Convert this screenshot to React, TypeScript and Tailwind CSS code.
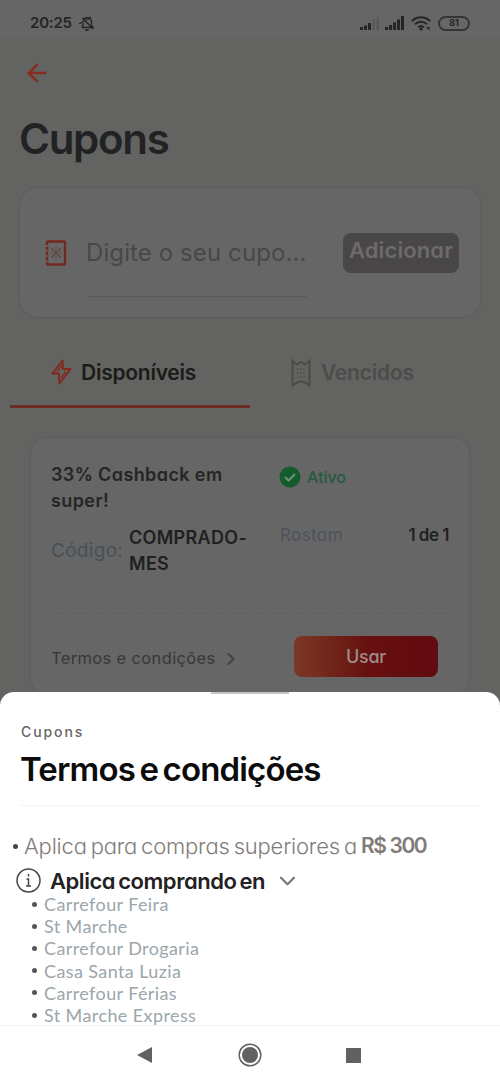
import { ArrowLeft, ChevronDown, ChevronRight } from 'lucide-react';

const stores = [
  'Carrefour Feira',
  'St Marche',
  'Carrefour Drogaria',
  'Casa Santa Luzia',
  'Carrefour Férias',
  'St Marche Express',
];

function StatusBar() {
  return (
    <div className="flex h-[38px] items-center bg-[#666666] pt-[8px] pr-[30px] pl-[30px] text-[#252525]">
      <span className="w-[43px] text-[15px] font-semibold tracking-[-0.2px] whitespace-nowrap">20:25</span>
      <svg className="ml-[5px] h-[17px] w-[18px]" viewBox="0 0 18 17" fill="none" stroke="currentColor" strokeWidth="1.4">
        <path d="M4 12.5h11L13.5 10V6.5a4.5 4.5 0 0 0-8.5-1.3M4 12.5 5.2 10V8M7.5 14.5c.7 1 2.3 1 3 0M1 9 13 2M4.5 3l10.5 11" />
      </svg>
      <div className="ml-auto flex items-center">
        <svg className="h-[14px] w-[19px]" viewBox="0 0 19 14">
          <path fill="currentColor" d="M0 11h3v3H0zM4 9.5h3V14H4zM8 7h3v7H8z" />
          <path fill="#595959" d="M12.5 3.5H15V14h-2.5zM16.5 1H19v13h-2.5z" />
        </svg>
        <svg className="ml-[6px] h-[14px] w-[19px]" viewBox="0 0 19 14" fill="currentColor">
          <path d="M0 11h3v3H0zM4 9h3v5H4zM8 6.5h3V14H8zM12 3.5h3V14h-3zM16 0h3v14h-3z" />
        </svg>
        <svg className="ml-[7px] h-[15px] w-[20px]" viewBox="0 0 20 15" fill="none" stroke="currentColor" strokeWidth="2">
          <path d="M1 5.2C6 0 14 0 19 5.2M4 8.3c3.5-3.3 8.5-3.3 12 0M7 11.2c2-1.7 4-1.7 6 0" />
          <path fill="currentColor" stroke="none" d="m10 11 2 2-2 2-2-2zM15 11h3.5v3.5z" />
        </svg>
        <span className="ml-[7px] flex h-[15px] w-[32px] items-center justify-center rounded-full border-2 border-[#353535] text-[9px] font-bold">
          81
        </span>
      </div>
    </div>
  );
}

function CouponIcon() {
  return (
    <svg className="h-[26px] w-[22px]" viewBox="0 0 22 26" fill="none">
      <rect x="2" y="1.5" width="18" height="23" rx="1" stroke="#74281f" strokeWidth="2.4" />
      <path d="M0 6h3M0 11h3M0 16h3M0 21h3" stroke="#666" strokeWidth="1.3" />
      <path d="m6.5 8.5 9 9m0-9-9 9" stroke="#5c473f" strokeWidth="1.5" />
      <path d="M11 7v2.5M11 16.5V19M5.5 13H8M14 13h2.5" stroke="#803a2c" strokeWidth="1.2" />
    </svg>
  );
}

function BoltIcon() {
  return (
    <svg className="h-[26px] w-[21px]" viewBox="0 0 21 26" fill="none" stroke="#83291c" strokeWidth="2" strokeLinejoin="round">
      <path d="M11.5 1.5 1.5 14.5H8L8.5 24.5 19.5 10H12z" />
      <path d="M11 6 6 13M15 12l-5 7" strokeWidth="1.3" />
    </svg>
  );
}

function TicketIcon() {
  return (
    <svg className="h-[28px] w-[20px]" viewBox="0 0 20 28" fill="none" stroke="#4b4b49" strokeWidth="2">
      <path d="M1.5 1.5 6 5.5 10 3l4 2.5 4.5-4v25L14 23.5 10 22l-4 1.5-4.5 3z" />
      <path d="M6 10h8M6 14h8M6 18h8" strokeWidth="1.2" strokeDasharray="2 1" />
    </svg>
  );
}

function CouponCard() {
  return (
    <div className="mx-[31px] mt-[30px] h-[256px] rounded-[16px] bg-[#666666] px-5 pt-6 shadow-[0_0_3px_rgba(0,0,0,0.1)]">
      <div className="flex h-[115px]">
        <div className="w-[229px]">
          <div className="text-[18px] leading-[26px] font-semibold tracking-[0.4px] text-[#252525]">
            33% Cashback em
            <br />
            super!
          </div>
          <div className="mt-[11px] flex items-center">
            <span className="w-[78px] text-[19px] tracking-[0.3px] text-[#465057]">Código:</span>
            <span className="text-[18px] leading-[26px] font-semibold tracking-[0.3px] whitespace-nowrap text-[#202020]">
              COMPRADO-
              <br />
              MES
            </span>
          </div>
        </div>
        <div className="flex-1">
          <div className="mt-[4px] flex h-[22px] items-center text-[16px] font-medium text-[#245b3e]">
            <svg className="mr-[6px] -ml-px h-[22px] w-[22px]" viewBox="0 0 22 22" fill="none">
              <circle cx="11" cy="11" r="10.5" fill="#155c2b" />
              <path d="m6 11 3.5 3.5L16 8" stroke="#719079" strokeWidth="2" />
            </svg>
            Ativo
          </div>
          <div className="mt-[35px] flex items-center justify-between leading-[24px]">
            <span className="text-[17px] tracking-[0.4px] text-[#4c535a]">Rostam</span>
            <span className="text-[17px] font-semibold tracking-[-0.5px] text-[#222]">1 de 1</span>
          </div>
        </div>
      </div>
      <div className="mt-9 border-t border-dashed border-[#5d5d5d]" />
      <div className="mt-[22px] flex h-[41px] items-center">
        <span className="w-[164px] pt-1 text-[16.5px] tracking-[0.35px] whitespace-nowrap text-[#383838]">Termos e condições</span>
        <ChevronRight className="mt-1 ml-[6px] h-[20px] w-[20px] text-[#424242]" strokeWidth={2.5} />
        <div className="mr-[11px] ml-auto flex h-[41px] w-[144px] items-center justify-center rounded-[8px] bg-linear-to-r from-[#7c3725] via-[#67100f] via-50% to-[#620b10] text-[18px] font-medium tracking-[-0.3px] text-[#9b8e8c]">
          Usar
        </div>
      </div>
    </div>
  );
}

function TermsSheet() {
  return (
    <div className="h-[333px] rounded-t-[14px] bg-white">
      <div className="mx-auto h-[2px] w-[78px] bg-[#c6c6c6]" />
      <div className="px-5 pt-[28px]">
        <div className="ml-px h-[20px] text-[14px] leading-[20px] font-medium tracking-[1.9px] text-[#666]">Cupons</div>
        <div className="mt-[7px] h-[40px] text-[33px] leading-[40px] font-semibold tracking-[-0.85px] whitespace-nowrap text-[#0c0c0c] [word-spacing:-3px]">
          Termos e condições
        </div>
        <div className="mt-[16px] h-px bg-[#f4f4f4]" />
      </div>
      <div className="mt-[25px] flex h-[30px] items-center pl-[13px] text-[22px] whitespace-nowrap text-[#817c79]">
        <span className="mr-[6px] h-[5px] w-[5px] rounded-full bg-[#444]" />
        <span className="w-[333px] font-light tracking-[-0.2px] [word-spacing:-2px]">Aplica para compras superiores a</span>
        <span className="ml-[4px] text-[21px] font-semibold tracking-[-1.4px]">R$ 300</span>
      </div>
      <div className="mt-[6px] flex h-[26px] items-center pt-px pl-4">
        <svg className="h-[25px] w-[25px]" viewBox="0 0 25 25" fill="none" stroke="#484848">
          <circle cx="12.5" cy="12.5" r="11.5" strokeWidth="1.5" />
          <path d="M12.5 6v2.5M10.5 11h2v7M10 18h5" strokeWidth="1.5" />
        </svg>
        <span className="ml-[9px] w-[215px] text-[22px] leading-[22px] font-semibold tracking-[-0.45px] whitespace-nowrap text-[#242122] [word-spacing:-2px]">
          Aplica comprando en
        </span>
        <ChevronDown className="ml-[9px] h-[26px] w-[27px] text-[#777]" strokeWidth={2} />
      </div>
      <ul className="pl-[32px]">
        {stores.map((store) => (
          <li
            key={store}
            className="flex h-[22.2px] items-center font-['Lato',sans-serif] text-[18px] leading-[20px] tracking-[0.4px] text-[#9ba6ac]"
          >
            <span className="mr-[7px] h-[5px] w-[5px] rounded-full bg-[#555]" />
            {store}
          </li>
        ))}
      </ul>
    </div>
  );
}

export default function App() {
  return (
    <div className="h-[1085px] w-[500px] overflow-hidden bg-[#636361] font-['Inter',sans-serif] [font-feature-settings:'cv11']">
      <div className="h-[692px]">
        <StatusBar />
        <ArrowLeft className="mt-[21px] ml-[23px] h-[28px] w-[28px] text-[#872d20]" strokeWidth={2.2} />
        <h1 className="mt-[27px] ml-[19px] h-[50px] text-[42px] leading-[50px] font-semibold tracking-[-1.3px] text-[#202223]">
          Cupons
        </h1>
        <div className="mx-5 mt-[24px] flex h-[129px] items-center rounded-[18px] bg-[#666666] pr-[21px] pl-[25px] shadow-[0_0_3px_rgba(0,0,0,0.13)]">
          <CouponIcon />
          <div className="mt-[28px] ml-[19px] w-[221px] border-b border-[#5a5a5a] pb-[27px] text-[24px] leading-[32px] tracking-[0.1px] whitespace-nowrap text-[#484848]">
            Digite o seu cupo...
          </div>
          <div className="ml-auto flex h-[40px] w-[116px] items-center justify-center rounded-[8px] bg-[#494647] pb-1 text-[22px] font-semibold tracking-[0.1px] text-[#6d6a6b]">
            Adicionar
          </div>
        </div>
        <div className="mt-[39px] flex h-[52px] px-[10px]">
          <div className="flex w-[240px] border-b-[3px] border-[#6d2c26] pt-[3px] pl-[41px]">
            <BoltIcon />
            <span className="ml-[9px] text-[21px] leading-[27px] font-semibold tracking-[-0.25px] text-[#1b1b1a]">Disponíveis</span>
          </div>
          <div className="flex flex-1 pt-[3px] pl-[41px]">
            <TicketIcon />
            <span className="ml-[10px] text-[21px] leading-[27px] font-semibold tracking-[-0.2px] text-[#4c4c4a]">Vencidos</span>
          </div>
        </div>
        <CouponCard />
      </div>
      <TermsSheet />
      <div className="flex h-[60px] items-center border-t border-[#f3f3f3] bg-white pb-px">
        <svg className="ml-[137px] h-[18px] w-[15px]" viewBox="0 0 15 18" fill="#616161">
          <path d="M15 1v16L0 9z" />
        </svg>
        <svg className="ml-[86px] h-[24px] w-[24px]" viewBox="0 0 24 24" fill="none">
          <circle cx="12" cy="12" r="10.8" stroke="#616161" strokeWidth="1.5" />
          <circle cx="12" cy="12" r="8" fill="#616161" />
        </svg>
        <div className="ml-[84px] h-[15px] w-[15px] bg-[#616161]" />
      </div>
    </div>
  );
}
